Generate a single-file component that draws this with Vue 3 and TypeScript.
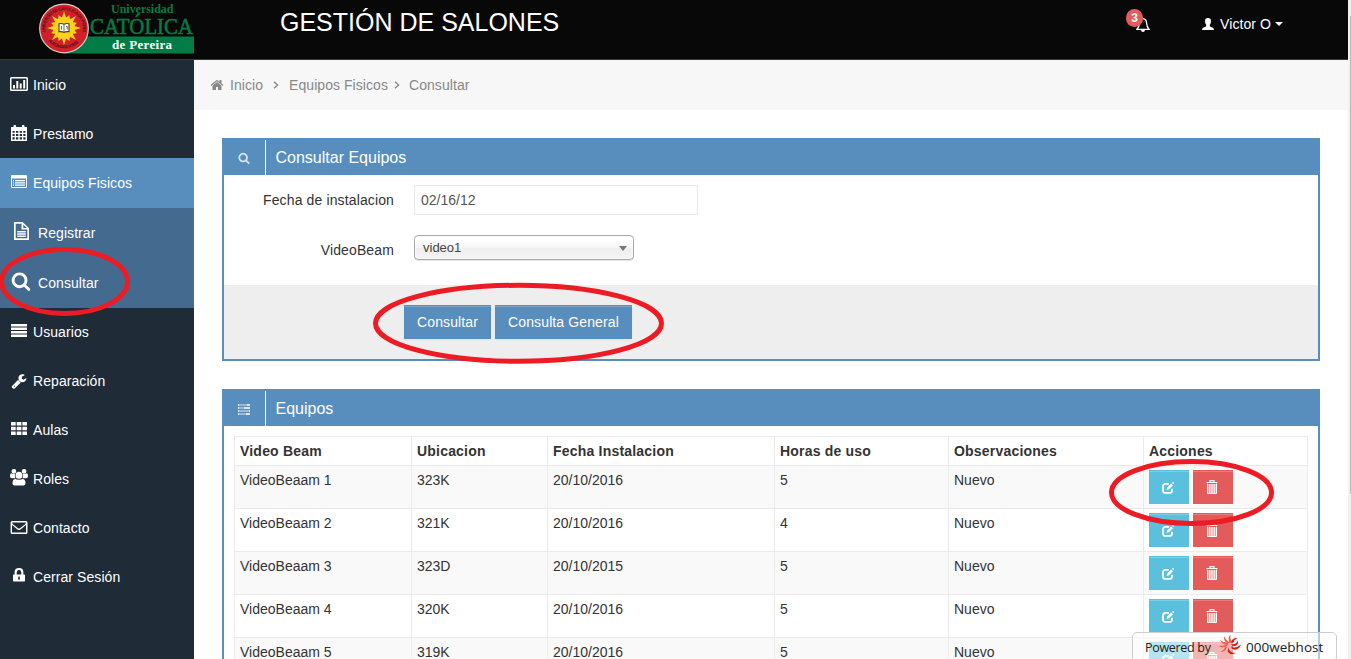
<script setup lang="ts">
interface MenuItem {
  icon: string
  label: string
  active?: boolean
  children?: { icon: string; label: string }[]
}

interface Equipo {
  nombre: string
  ubicacion: string
  fecha: string
  horas: number
  obs: string
}

const menu: MenuItem[] = [
  { icon: 'chart', label: 'Inicio' },
  { icon: 'calendar', label: 'Prestamo' },
  {
    icon: 'listalt',
    label: 'Equipos Fisicos',
    active: true,
    children: [
      { icon: 'file', label: 'Registrar' },
      { icon: 'search', label: 'Consultar' },
    ],
  },
  { icon: 'align', label: 'Usuarios' },
  { icon: 'wrench', label: 'Reparación' },
  { icon: 'grid', label: 'Aulas' },
  { icon: 'users', label: 'Roles' },
  { icon: 'mail', label: 'Contacto' },
  { icon: 'lock', label: 'Cerrar Sesión' },
]

const columns = ['Video Beam', 'Ubicacion', 'Fecha Instalacion', 'Horas de uso', 'Observaciones', 'Acciones']

const equipos: Equipo[] = [
  { nombre: 'VideoBeaam 1', ubicacion: '323K', fecha: '20/10/2016', horas: 5, obs: 'Nuevo' },
  { nombre: 'VideoBeaam 2', ubicacion: '321K', fecha: '20/10/2016', horas: 4, obs: 'Nuevo' },
  { nombre: 'VideoBeaam 3', ubicacion: '323D', fecha: '20/10/2015', horas: 5, obs: 'Nuevo' },
  { nombre: 'VideoBeaam 4', ubicacion: '320K', fecha: '20/10/2016', horas: 5, obs: 'Nuevo' },
  { nombre: 'VideoBeaam 5', ubicacion: '319K', fecha: '20/10/2016', horas: 5, obs: 'Nuevo' },
]

/* Filled silhouettes on an 18 x 18 grid, except where a viewBox is given. */
const icons: Record<string, { box?: string; d: string }> = {
  chart: { d: 'M1.500 2h15q1.500 0 1.500 1.500v11q0 1.500-1.500 1.500h-15Q0 16 0 14.500v-11Q0 2 1.500 2zM1.500 3.500v11h15v-11zM3 10h2v3.500H3zM6.300 6h2v7.500h-2zM9.700 8.500h2v5h-2zM13.200 5h2v8.500h-2z' },
  calendar: { d: 'M1 3h2.500V2q0-1 1-1h.6q1 0 1 1v1h5.800V2q0-1 1-1h.6q1 0 1 1v1H17v14H1zM2.500 7v1.700h2.200V7zM6 7v1.700h2.300V7zM9.700 7v1.700H12V7zM13.300 7v1.700h2.200V7zM2.500 10v2h2.200v-2zM6 10v2h2.300v-2zM9.700 10v2H12v-2zM13.300 10v2h2.200v-2zM2.500 13.300v2.200h2.200v-2.200zM6 13.300v2.200h2.300v-2.200zM9.700 13.300v2.200H12v-2.200zM13.300 13.300v2.200h2.200v-2.200z' },
  listalt: { d: 'M1 4q0-1 1-1h14q1 0 1 1v11q0 1-1 1H2q-1 0-1-1zM2 6.500V15h14V6.500zM3 8h1v1.200H3zM5 8h10v1.200H5zM3 10.200h1v1.200H3zM5 10.200h10v1.200H5zM3 12.500h1v1.200H3zM5 12.500h10v1.200H5z' },
  file: { d: 'M2 0h8.500L17 6v12H2zM3.700 1.700v14.600h11.600V7.500H9.500V1.700zM11.300 2.600V6h3.500zM5.200 9h8.600v1.400H5.200zM5.200 11.300h8.600v1.400H5.200zM5.200 13.600h8.600V15H5.200z' },
  search: { box: '0 0 1792 1792', d: 'M1216 832q0-185-131.500-316.500t-316.500-131.500-316.500 131.500-131.500 316.500 131.500 316.500 316.500 131.500 316.500-131.500 131.500-316.500zm512 832q0 52-38 90t-90 38q-54 0-90-38l-343-342q-179 124-399 124-143 0-273.500-55.500t-225-150-150-225-55.500-273.500 55.500-273.500 150-225 225-150 273.500-55.500 273.500 55.500 225 150 150 225 55.500 273.500q0 220-124 399l343 343q37 37 37 90z' },
  align: { d: 'M1 3h16v2.500H1zM1 6.500h16V9H1zM1 10h16v2.500H1zM1 13.500h16V16H1z' },
  wrench: { box: '0 0 1792 1792', d: 'M448 1472q0-26-19-45t-45-19-45 19-19 45 19 45 45 19 45-19 19-45zm644-420l-682 682q-37 37-90 37-52 0-91-37l-106-108q-38-36-38-90 0-53 38-91l681-681q39 98 114.500 173.500t173.500 114.500zm634-435q0 39-23 106-47 134-164.500 217.500t-258.500 83.500q-185 0-316.500-131.500t-131.500-316.500 131.500-316.500 316.500-131.500q58 0 121.500 16.500t107.500 46.500q16 11 16 28t-16 28l-293 169v224l193 107q5-3 79-48.500t135.500-81 70.500-35.500q15 0 23.500 10t8.500 25z' },
  grid: { d: 'M1 3h4.700v3.600H1zM6.700 3h4.700v3.600H6.700zM12.400 3H17v3.600h-4.600zM1 7.700h4.700v3.600H1zM6.700 7.700h4.700v3.600H6.700zM12.400 7.700H17v3.600h-4.600zM1 12.400h4.700V16H1zM6.700 12.400h4.700V16H6.700zM12.400 12.400H17V16h-4.600z' },
  users: { d: 'M1.500 3.300a2.400 2.400 0 1 1 4.800 0a2.400 2.400 0 1 1-4.800 0zM11.700 3.300a2.400 2.400 0 1 1 4.800 0a2.400 2.400 0 1 1-4.800 0zM5.500 7.300a3.500 3.500 0 1 1 7 0a3.500 3.500 0 1 1-7 0zM0 8.500Q0 5.300 1.300 5.300q1.900 1.200 3.700.5Q4.400 8.500 5.500 10.300H2Q0 10.300 0 8.500zM18 8.500q0-3.200-1.300-3.200q-1.900 1.200-3.700.5Q13.600 8.500 12.500 10.300h3.500q2 0 2-1.800zM5 11Q9 12.600 13 11Q15.500 11.500 15.500 15.300q0 2.200-2 2.200H4.500q-2 0-2-2.200Q2.500 11.500 5 11z' },
  mail: { d: 'M2.200 3h13.600Q17.500 3 17.500 4.500v10q0 1.500-1.700 1.500H2.200Q.6 16 .6 14.500v-10Q.6 3 2.200 3zM2 7v7.500h14V7l-5.500 4.500q-1.500 1-3 0zM2 4.400q.2 1.200 1.200 2L8 10.200q1 .8 2 0l4.800-3.800q1-.8 1.200-2z' },
  lock: { d: 'M3.800 8.500h.8V6.400Q4.600 2 9 2t4.400 4.400v2.100h.8q.8 0 .8.800v5.400q0 .8-.8.800H3.800q-.8 0-.8-.8V9.300q0-.8.8-.8zM6.700 8.500h4.600V6.400Q11.300 4 9 4T6.700 6.400zM8.300 10.500v1.300l-.4 1.700h2.200l-.4-1.700v-1.300z' },
  home: { box: '0 0 1792 1792', d: 'M1472 992v480q0 26-19 45t-45 19h-384v-384h-256v384h-384q-26 0-45-19t-19-45v-480q0-1 .5-3t.5-3l575-474 575 474q1 2 1 6zm223-69l-62 74q-8 9-21 11h-3q-13 0-21-7l-692-577-692 577q-12 8-24 7-13-2-21-11l-62-74q-8-10-7-23.500t11-21.500l719-599q32-26 76-26t76 26l244 204v-195q0-14 9-23t23-9h192q14 0 23 9t9 23v408l219 182q10 8 11 21.500t-7 23.500z' },
}

/* Alternating long and short rays of the university sun. */
const rays: string = Array.from({ length: 32 }, (_, i) => {
  const r = i % 2 ? 10.5 : i % 4 ? 14 : 17
  const a = (i * Math.PI) / 16
  return `${(25 + r * Math.sin(a)).toFixed(2)},${(25 - r * Math.cos(a)).toFixed(2)}`
}).join(' ')
</script>

<template>
  <div class="screen">
    <header class="topbar">
      <svg class="logo" viewBox="0 0 156 52" width="156" height="52">
        <defs>
          <path id="arcTop" d="M6.200 29A19 19 0 1 1 43.800 29" />
          <path id="arcLow" d="M9 38A21 21 0 0 0 41 38" />
        </defs>
        <rect x="26" y="33.500" width="129" height="17" fill="#037b45" />
        <circle cx="25" cy="25.500" r="24.300" fill="#d0202a" stroke="#d8d2cc" stroke-width="1.200" />
        <text class="ring"><textPath href="#arcTop" textLength="70">UNIVERSIDAD CATOLICA DE PEREIRA</textPath></text>
        <text class="ring"><textPath href="#arcLow" textLength="34">AUTONOMA VOBIS</textPath></text>
        <polygon :points="rays" fill="#f8d21c" />
        <circle cx="25" cy="25" r="10.800" fill="#f8d21c" />
        <path d="M20 20.800q2.500-.8 5 .5q2.500-1.300 5-.5v8q-2.500-.6-5 .5q-2.500-1.100-5-.5z" fill="#fff" stroke="#4a3a20" stroke-width="1.100" />
        <path d="M25 21.500v7M22.500 23v3.500M27 23.500h1.300v3" fill="none" stroke="#5a4520" stroke-width=".8" />
        <text x="72" y="10" class="serif uni" textLength="62.500">Universidad</text>
        <text x="51" y="31" class="serif cat" textLength="103" lengthAdjust="spacingAndGlyphs">CATÓLICA</text>
        <text x="73" y="46" class="serif per" textLength="60">de Pereira</text>
      </svg>
      <h1>GESTIÓN DE SALONES</h1>
      <div class="bell">
        <svg viewBox="0 0 14 16" width="14" height="16">
          <path d="M7 1.700Q3.600 2 3.400 6Q3.300 9.700 1 12.300h12Q10.700 9.700 10.600 6Q10.400 2 7 1.700z" fill="none" stroke="#fff" stroke-width="1.300" />
          <path d="M5 13h4q-.3 2-2 2t-2-2z" fill="#fff" />
        </svg>
        <span class="count">3</span>
      </div>
      <div class="user">
        <svg viewBox="0 0 12 12" width="12" height="12">
          <path d="M6 0q3 0 3 3.300Q9 5.500 7.800 6.800v1.400q1 .8 2.800 1.300Q12 10 12 12H0q0-2 1.400-2.500q1.800-.5 2.800-1.300V6.800Q3 5.500 3 3.300Q3 0 6 0z" fill="#fff" />
        </svg>
        <span>Victor O</span>
        <i class="caret"></i>
      </div>
    </header>

    <div class="body">
      <nav class="sidebar">
        <template v-for="item in menu" :key="item.label">
          <a class="item" :class="{ active: item.active }">
            <svg class="ico" :class="item.icon" :viewBox="icons[item.icon].box ?? '0 0 18 18'">
              <path :d="icons[item.icon].d" fill-rule="evenodd" />
            </svg>
            <span>{{ item.label }}</span>
          </a>
          <div v-if="item.children" class="sub">
            <a v-for="child in item.children" :key="child.label" class="subitem">
              <svg class="ico" :class="child.icon" :viewBox="icons[child.icon].box ?? '0 0 18 18'">
                <path :d="icons[child.icon].d" fill-rule="evenodd" />
              </svg>
              <span>{{ child.label }}</span>
            </a>
          </div>
        </template>
      </nav>

      <main class="content">
        <div class="crumbs">
          <svg class="home" :viewBox="icons.home.box" width="14" height="14"><path :d="icons.home.d" /></svg>
          <span class="c1">Inicio</span>
          <svg class="sep s1" viewBox="0 0 6 8"><path d="M1 .7L4.600 4 1 7.300" /></svg>
          <span>Equipos Fisicos</span>
          <svg class="sep s2" viewBox="0 0 6 8"><path d="M1 .7L4.600 4 1 7.300" /></svg>
          <span>Consultar</span>
        </div>

        <section class="panel">
          <div class="phead">
            <span class="pico">
              <svg :viewBox="icons.search.box" width="12" height="12"><path :d="icons.search.d" /></svg>
            </span>
            <h2>Consultar Equipos</h2>
          </div>
          <div class="form">
            <div class="frow">
              <label>Fecha de instalacion</label>
              <div class="input">02/16/12</div>
            </div>
            <div class="frow second">
              <label>VideoBeam</label>
              <div class="select"><span>video1</span><i></i></div>
            </div>
          </div>
          <div class="pfoot">
            <button class="btn b1">Consultar</button>
            <button class="btn b2">Consulta General</button>
          </div>
        </section>

        <section class="panel">
          <div class="phead">
            <span class="pico">
              <svg viewBox="0 0 12 12" width="12" height="12">
                <path fill-rule="evenodd" d="M0 1h12v2H0zM1 1.600v.8h8v-.8zM0 4h12v2H0zM1 4.600v.8h5v-.8zM0 7h12v2H0zM1 7.600v.8h10v-.8zM0 10h12v2H0zM1 10.600v.8h7v-.8z" />
              </svg>
            </span>
            <h2>Equipos</h2>
          </div>
          <div class="tablewrap">
            <table>
              <colgroup>
                <col class="w1" /><col class="w2" /><col class="w3" /><col class="w4" /><col class="w5" /><col class="w6" />
              </colgroup>
              <thead>
                <tr><th v-for="c in columns" :key="c">{{ c }}</th></tr>
              </thead>
              <tbody>
                <tr v-for="e in equipos" :key="e.nombre">
                  <td>{{ e.nombre }}</td>
                  <td>{{ e.ubicacion }}</td>
                  <td>{{ e.fecha }}</td>
                  <td>{{ e.horas }}</td>
                  <td>{{ e.obs }}</td>
                  <td>
                    <div class="acts">
                      <span class="act edit">
                        <svg viewBox="0 0 12 12" width="12" height="12">
                          <path d="M7 1.900H3.500Q1 1.900 1 4.400v4q0 2.500 2.500 2.500h4q2.500 0 2.500-2.500V6.800" fill="none" stroke="#fff" stroke-width="1.800" />
                          <path d="M4.500 8l.7-2.600 4-4 1.800 1.800-4 4zM10 .9l.7-.7q.5-.3.900.1l.2.200q.4.500 0 .9l-.7.700z" fill="#fff" />
                        </svg>
                      </span>
                      <span class="act del">
                        <svg viewBox="0 0 12 14" width="12" height="14">
                          <path d="M4 2V.600h4V2M.5 2.500h11" fill="none" stroke="#fff" stroke-width="1.100" />
                          <path d="M1.500 4h9v9.500h-9z" fill="#eda0a0" />
                          <path d="M1.500 3.500v10h9v-10M3.750 4v9M6 4v9M8.250 4v9" fill="none" stroke="#fff" />
                        </svg>
                      </span>
                    </div>
                  </td>
                </tr>
              </tbody>
            </table>
          </div>
        </section>
      </main>
    </div>

    <div class="scroll"><i></i></div>

    <svg class="marks" viewBox="0 0 1351 659" width="1351" height="659">
      <ellipse cx="64.500" cy="281.500" rx="63" ry="32" />
      <ellipse cx="518.500" cy="323.300" rx="143" ry="38" />
      <ellipse cx="1191.500" cy="492.500" rx="80" ry="31" />
    </svg>

    <div class="hosting">
      <span class="pw">Powered by</span>
      <svg viewBox="0 0 24 22" width="24" height="22">
        <g class="blade">
          <path d="M12 9Q9 4 12.500.5Q11.500 4.500 14 8Z" />
          <path d="M10 9.500Q5 6.500 6 2Q7.500 6 12 8.500Z" />
          <path d="M9.500 11Q4 10.500 2 6Q5.500 9 10.500 9.200Z" />
          <path d="M9 12Q4 14.500.5 12Q5 12 9.500 10.500Z" />
          <path d="M9 13.500Q6.500 18 2.500 18Q6 16 8 12.500Z" />
        </g>
        <g class="blade dark">
          <path d="M13 8.500Q14 3.500 19.500 4Q16 5.500 15 9Z" />
          <path d="M13 10Q18 11.500 20 6Q21 12.500 14.500 12.200Z" />
          <path d="M13 12.500Q18 15 23 10.500Q20.500 17.500 14 15Z" />
          <path d="M10.500 14Q11.500 19 18 19Q12 22 9.500 17Z" />
        </g>
      </svg>
      <span class="wh">000webhost</span>
    </div>
  </div>
</template>

<style>
body {
  margin: 0;
  overflow: hidden;
}
</style>

<style scoped>
.screen {
  position: relative;
  width: 1351px;
  height: 659px;
  overflow: hidden;
  background: #fff;
  font: 14px/20px "Liberation Sans", Arial, sans-serif;
  color: #333;
  box-sizing: border-box;
}
.screen * { box-sizing: border-box; }

.topbar {
  display: flex;
  width: 1348px;
  height: 60px;
  background: #080808;
  border-bottom: 1px solid #3a3a3a;
  color: #fff;
}
.logo { margin: 3px 0 0 39px; flex: none; overflow: visible; }
.ring { font: bold 4.500px "Liberation Sans", sans-serif; fill: #5c1414; }
.serif { font-family: "Liberation Serif", serif; font-weight: bold; }
.uni { font-size: 12px; fill: #037b45; }
.cat { font-size: 23.500px; font-weight: normal; fill: #037b45; stroke: #037b45; stroke-width: .6px; }
.per { font-size: 13px; fill: #fff; }
h1 {
  margin: 7px 0 0 85px;
  width: 846px;
  font-size: 25px;
  line-height: 30px;
  font-weight: normal;
  white-space: nowrap;
}
.bell { position: relative; width: 75px; padding: 17px 0 0 10px; }
.bell svg { display: block; }
.count {
  position: absolute;
  left: 0;
  top: 9px;
  width: 17px;
  height: 18px;
  border-radius: 9px;
  background: #e35b5a;
  font-size: 12px;
  font-weight: bold;
  line-height: 18px;
  text-align: center;
}
.user { display: flex; align-items: center; height: 48px; margin-left: 1px; white-space: nowrap; }
.user span { margin-left: 6px; letter-spacing: .1px; }
.caret {
  margin-left: 4px;
  border: 4px solid transparent;
  border-top-color: #fff;
  border-bottom: 0;
}

.body { display: flex; width: 1348px; height: 599px; }
.sidebar { width: 194px; flex: none; background: #1f2b36; color: #fff; letter-spacing: .07px; }
.item { display: flex; align-items: center; height: 49px; padding-left: 10px; }
.item.active { height: 50px; background: #578ebe; }
.item span { margin-left: 5px; }
.ico { width: 18px; height: 18px; fill: #fff; flex: none; margin-top: -2px; }
.item .ico.wrench { width: 16px; height: 16px; margin: 0 1px; }
.item .ico.lock { margin-top: -1px; }
.item .ico.listalt { margin-top: -4px; }
.sub { background: #446b8f; }
.sub ~ .item { padding-bottom: 2px; }
.sub ~ .item .ico:not(.wrench):not(.mail) { margin-top: -4px; }
.subitem { display: flex; align-items: center; height: 50px; padding-left: 12px; }
.subitem span { margin-left: 6px; }
.subitem .ico { width: 20px; height: 20px; margin-top: -4px; }
.subitem .ico.search { margin-left: -1px; margin-right: 1px; }
.subitem .ico.file { height: 18px; width: 18px; margin: -4px 2px 0 0; }

.content { flex: 1; }
.crumbs {
  display: flex;
  align-items: center;
  height: 50px;
  padding-left: 16px;
  background: #f7f7f7;
  color: #888;
}
.crumbs svg { fill: #888; }
.crumbs span { letter-spacing: .06px; }
.c1 { margin-left: 6px; }
.crumbs .sep { width: 6px; height: 8px; fill: none; stroke: #888; stroke-width: 1.400px; }
.s1 { margin: 0 10px; }
.s2 { margin: 0 9px 0 6px; }

.panel {
  margin: 28px 28px 0;
  border: 2px solid #578ebe;
  width: 1098px;
}
.phead { display: flex; height: 35px; background: #578ebe; color: #fff; }
.pico { display: flex; align-items: center; justify-content: center; width: 42px; border-right: 1px solid #fff; padding: 1px 1px 0 0; }
.pico svg { fill: #dce6ef; }
h2 { margin: 0 0 0 9.500px; font-size: 16px; line-height: 36px; font-weight: normal; }

.form { height: 110px; padding-top: 10px; }
.frow { display: flex; height: 30px; align-items: center; }
.frow.second { margin-top: 20px; }
label { width: 170px; text-align: right; letter-spacing: .13px; }
.input {
  margin-left: 20px;
  width: 284px;
  height: 30px;
  border: 1px solid #e8e8e8;
  padding-left: 6px;
  line-height: 28px;
  color: #555;
}
.select {
  display: flex;
  justify-content: space-between;
  align-items: center;
  width: 220px;
  height: 25px;
  margin: -5px 0 0 20px;
  padding: 0 6px 0 8px;
  border: 1px solid #aaa;
  border-radius: 4px;
  background: linear-gradient(#fff 20%, #f6f6f6 50%, #eee 52%, #f4f4f4 100%);
  box-shadow: inset 0 0 3px #fff, 0 1px 1px rgba(0, 0, 0, .1);
  font-size: 13px;
  color: #444;
}
.select i { border: 4px solid transparent; border-top: 5px solid #777; border-bottom: 0; margin-top: 2px; }
.pfoot { display: flex; gap: 4px; height: 74px; padding: 20px 0 0 180px; background: #eee; }
.btn {
  height: 34px;
  border: 0;
  padding: 0;
  background: #578ebe;
  color: #fff;
  font: 14px "Liberation Sans", Arial, sans-serif;
  letter-spacing: .12px;
  box-shadow: inset 0 1px 0 #578ebe, inset 0 2px 0 #79a5cb, 0 1px 2px rgba(0, 0, 0, .06);
}
.b1 { width: 87px; }
.b2 { width: 137px; }

.tablewrap { padding: 10px 10px 0; }
table {
  width: 1074px;
  table-layout: fixed;
  border-spacing: 0;
  border-top: 1px solid #ebebeb;
  border-left: 1px solid #ebebeb;
}
.w1 { width: 177px; }
.w2 { width: 136px; }
.w3 { width: 227px; }
.w4 { width: 174px; }
.w5 { width: 195px; }
.w6 { width: 164px; }
th, td {
  padding: 4px 5px 0;
  border-right: 1px solid #ebebeb;
  border-bottom: 1px solid #ebebeb;
  text-align: left;
  vertical-align: top;
}
th { height: 29px; letter-spacing: .2px; }
td { height: 43px; }
tbody tr:nth-child(odd) td { background: #f9f9f9; }
.acts { display: flex; gap: 4px; }
.act {
  display: flex;
  align-items: center;
  justify-content: center;
  width: 40px;
  height: 34px;
}
.edit { background: #5bc0de; box-shadow: inset 0 1px 0 #5bc0de, inset 0 2px 0 #7dcde5; padding: 1px 2px 0 0; }
.del { background: #e35b5a; box-shadow: inset 0 1px 0 #e35b5a, inset 0 2px 0 #e97d7c; padding-right: 2px; }

.scroll { position: absolute; right: 0; top: 0; width: 3px; height: 659px; background: #f1f1f1; }
.scroll i { position: absolute; right: 0; top: 16px; width: 1px; height: 478px; background: #b8b8b8; }

.marks { position: absolute; left: 0; top: 0; }
.marks ellipse { fill: none; stroke: #ed1c24; stroke-width: 5px; }

.hosting {
  position: absolute;
  left: 1132px;
  top: 632px;
  display: flex;
  align-items: center;
  width: 205px;
  height: 30px;
  padding-left: 12px;
  border: 1px solid #ccc;
  border-radius: 5px;
  background: rgba(255, 255, 255, .55);
  font: 13px "Open Sans", "Noto Sans", sans-serif;
  color: #222;
  white-space: nowrap;
}
.hosting svg { margin: -4px 4px 0 7px; }
.pw { width: 66px; font-size: 12.500px; letter-spacing: -.3px; }
.wh { font-size: 13.500px; letter-spacing: .02px; }
.blade { fill: #ee5a44; }
.blade.dark { fill: #cf2015; }
</style>
